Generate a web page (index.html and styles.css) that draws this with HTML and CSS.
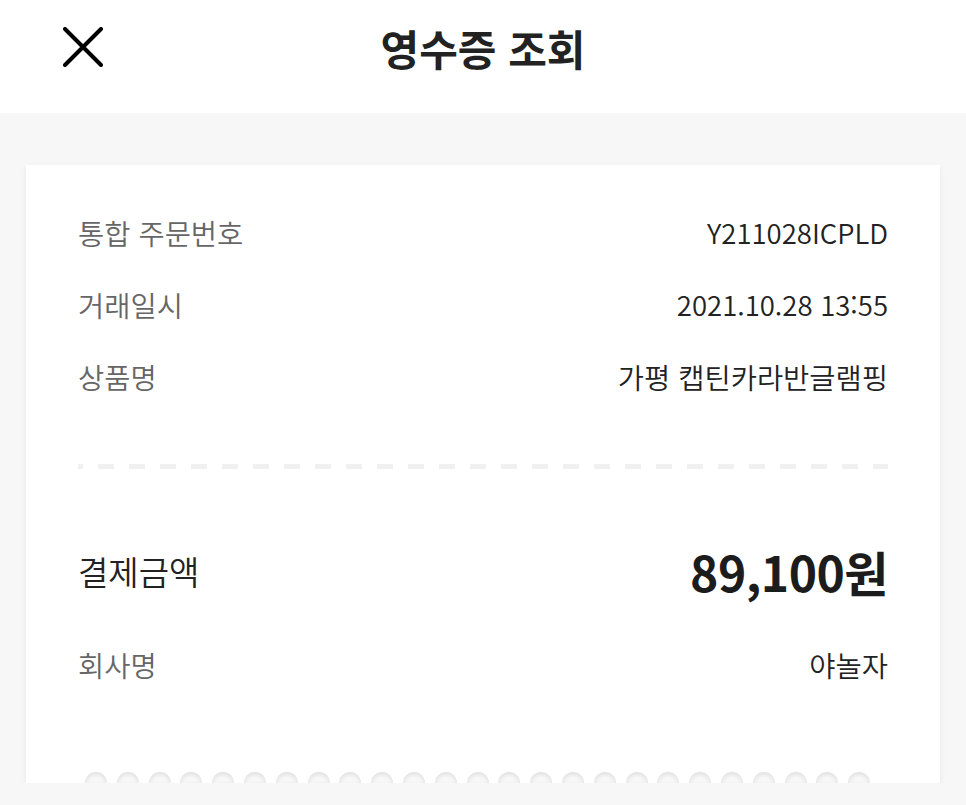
FILE: index.html
```html
<!DOCTYPE html>
<html lang="ko">
<head>
  <meta charset="UTF-8" />
  <meta name="viewport" content="width=device-width, initial-scale=1.0"/>
  <title>영수증 조회</title>
  <link rel="stylesheet" href="styles.css">
</head>
<body>

<header class="topbar">
  <button class="close-btn" aria-label="닫기">
    <svg width="40" height="40" viewBox="0 0 40 40">
      <path d="M2 2 L38 38 M38 2 L2 38" stroke="#000" stroke-width="4" stroke-linecap="round" fill="none"/>
    </svg>
  </button>
  <h1 class="title">영수증 조회</h1>
</header>

<main class="page">
  <section class="receipt">
    <div class="row">
      <span class="label">통합 주문번호</span>
      <span class="value latin">Y211028ICPLD</span>
    </div>
    <div class="row">
      <span class="label">거래일시</span>
      <span class="value latin">2021.10.28 13:55</span>
    </div>
    <div class="row">
      <span class="label">상품명</span>
      <span class="value">가평 캡틴카라반글램핑</span>
    </div>

    <div class="divider"></div>

    <div class="row total">
      <span class="total-label">결제금액</span>
      <span class="amount">89,100원</span>
    </div>
    <div class="row company">
      <span class="label">회사명</span>
      <span class="value">야놀자</span>
    </div>

    <div class="tear">
      <i></i><i></i><i></i><i></i><i></i><i></i><i></i><i></i><i></i><i></i>
      <i></i><i></i><i></i><i></i><i></i><i></i><i></i><i></i><i></i><i></i>
      <i></i><i></i><i></i><i></i><i></i>
    </div>
  </section>
</main>

</body>
</html>
```

FILE: styles.css
```css
body {
  margin: 0;
  background: #f7f7f7;
  font-family: "Noto Sans CJK KR", "Noto Sans", sans-serif;
  color: #222;
}

.topbar {
  position: relative;
  height: 113px;
  background: white;
  display: flex;
  align-items: center;
  justify-content: center;
}

.close-btn {
  position: absolute;
  left: 63px;
  top: 27px;
  width: 40px;
  height: 40px;
  padding: 0;
  border: none;
  background: none;
}

.close-btn svg {
  display: block;
}

.title {
  margin: 0 0 18px;
  font-size: 42px;
  font-weight: 700;
  color: #222;
  line-height: 1;
}

.page {
  padding: 52px 26px 0;
}

.receipt {
  background: white;
  padding: 31px 52px 0;
  box-shadow: 0 2px 6px rgba(0,0,0,0.07);
}

.row {
  height: 72px;
  display: flex;
  justify-content: space-between;
  align-items: center;
}

.label {
  font-size: 28.5px;
  font-weight: 350;
  color: #666;
}

.value {
  font-size: 28.5px;
  font-weight: 350;
  color: #222;
}

.value.latin {
  font-size: 27.5px;
}

.divider {
  height: 5px;
  margin: 52px 0 66px;
  background: repeating-linear-gradient(90deg, #f0f0f0 0 16px, transparent 16px 31px);
  background-position: -11px 0;
}

.total-label {
  font-size: 33px;
  font-weight: 350;
  color: #222;
}

.amount {
  font-size: 48px;
  font-weight: 700;
  color: #1c1c1c;
  letter-spacing: -0.5px;
}

.company {
  margin-top: 21px;
}

.tear {
  display: flex;
  gap: 9.8px;
  height: 11px;
  margin: 72px 0 0 7px;
}

.tear i {
  width: 22px;
  height: 11px;
  border-radius: 11px 11px 0 0;
  background: #f7f7f7;
  box-shadow: inset 0 2px 4px rgba(0,0,0,0.1);
}
```
